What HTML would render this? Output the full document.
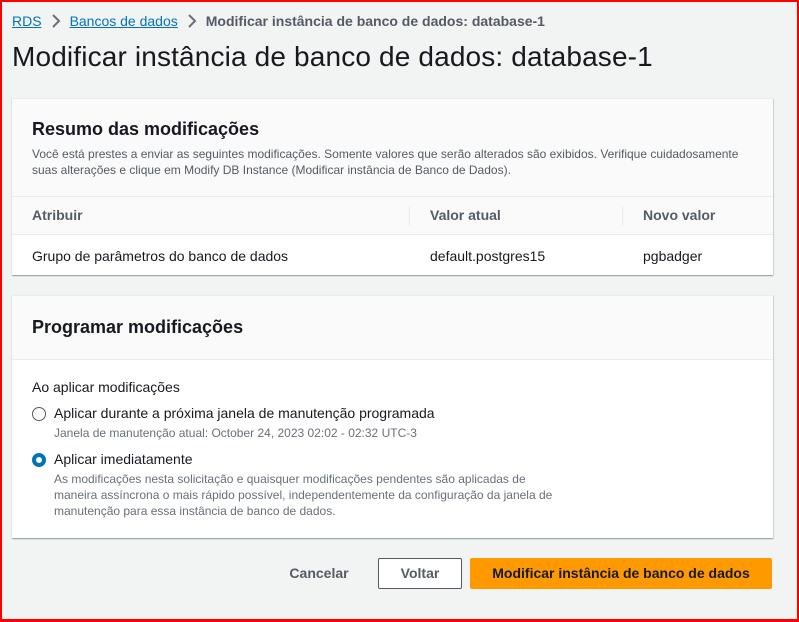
<!DOCTYPE html>
<html><head><meta charset="utf-8"><style>
*{box-sizing:border-box;margin:0;padding:0}
body{width:799px;height:622px;overflow:hidden;background:#f2f3f3;font-family:"Liberation Sans",sans-serif;color:#16191f;position:relative}
.frame{position:absolute;left:0;top:0;width:799px;height:622px;border:2px solid #f00;border-bottom-width:3px;pointer-events:none}
.bc{position:absolute;left:12px;top:13px;font-size:14px;color:#545b64}
.bc a{color:#0073bb;text-decoration:underline}
.bc svg{display:inline-block;margin:0 9px;vertical-align:-2px}
.bc b{color:#545b64}
h1{position:absolute;left:12px;top:41px;font-size:28px;letter-spacing:.15px;font-weight:normal;color:#16191f}
.card{position:absolute;left:12px;width:761px;background:#fff;box-shadow:0 1px 1px rgba(0,28,36,.35),1px 1px 1px rgba(0,28,36,.1);border-top:1px solid #eaeded}
.hd{background:#fafafa;border-bottom:1px solid #eaeded;padding:0 20px}
h2{font-size:18px;font-weight:bold}
.desc{font-size:12px;color:#545b64;line-height:16px;margin-top:6px}
.row{position:absolute;left:0;width:100%;font-size:14px}
.c{position:absolute}
.sub{font-size:12px;color:#687078;line-height:16px}
.radio{position:absolute;width:14px;height:14px;border-radius:50%;border:1.5px solid #545b64}
.radio.on{border:4px solid #0073bb;background:#fff}
.btn{position:absolute;top:558px;height:31px;font-size:14px;font-weight:bold;text-align:center;line-height:31px;border-radius:2px}
</style></head><body>
<div class="bc"><a>RDS</a><svg width="10" height="14" viewBox="0 0 10 14"><path d="M2 1l6 6-6 6" fill="none" stroke="#687078" stroke-width="2"/></svg><a>Bancos de dados</a><svg width="10" height="14" viewBox="0 0 10 14"><path d="M2 1l6 6-6 6" fill="none" stroke="#687078" stroke-width="2"/></svg><b>Modificar instância de banco de dados: database-1</b></div>
<h1>Modificar instância de banco de dados: database-1</h1>
<div class="card" style="top:98px;height:177px">
 <div class="hd" style="height:98px;padding-top:20px"><h2>Resumo das modificações</h2>
 <div class="desc">Você está prestes a enviar as seguintes modificações. Somente valores que serão alterados são exibidos. Verifique cuidadosamente suas alterações e clique em Modify DB Instance (Modificar instância de Banco de Dados).</div></div>
 <div class="row" style="top:98px;height:38px;background:#fafafa;border-bottom:1px solid #eaeded;font-weight:bold;color:#545b64">
  <span class="c" style="left:20px;top:10px">Atribuir</span>
  <span class="c" style="left:397px;top:9px;height:20px;border-left:1px solid #eaeded"></span>
  <span class="c" style="left:418px;top:10px">Valor atual</span>
  <span class="c" style="left:610px;top:9px;height:20px;border-left:1px solid #eaeded"></span>
  <span class="c" style="left:631px;top:10px">Novo valor</span></div>
 <div class="row" style="top:136px;height:41px;color:#16191f">
  <span class="c" style="left:20px;top:13px">Grupo de parâmetros do banco de dados</span>
  <span class="c" style="left:418px;top:13px">default.postgres15</span>
  <span class="c" style="left:631px;top:13px">pgbadger</span></div>
</div>
<div class="card" style="top:295px;height:243px">
 <div class="hd" style="height:64px;padding-top:21px"><h2>Programar modificações</h2></div>
 <div style="position:absolute;left:20px;top:83px;font-size:14px">Ao aplicar modificações</div>
 <div class="radio" style="left:20px;top:111px"></div>
 <div style="position:absolute;left:42px;top:109px;font-size:14px">Aplicar durante a próxima janela de manutenção programada</div>
 <div class="sub" style="position:absolute;left:42px;top:129px">Janela de manutenção atual: October 24, 2023 02:02 - 02:32 UTC-3</div>
 <div class="radio on" style="left:20px;top:157px"></div>
 <div style="position:absolute;left:42px;top:155px;font-size:14px">Aplicar imediatamente</div>
 <div class="sub" style="position:absolute;left:42px;top:175px;width:505px">As modificações nesta solicitação e quaisquer modificações pendentes são aplicadas de maneira assíncrona o mais rápido possível, independentemente da configuração da janela de manutenção para essa instância de banco de dados.</div>
</div>
<div class="btn" style="left:280px;width:78px;color:#545b64">Cancelar</div>
<div class="btn" style="left:378px;width:84px;background:#fff;border:1px solid #545b64;line-height:29px;color:#545b64">Voltar</div>
<div class="btn" style="left:470px;width:302px;background:#ff9900;color:#16191f">Modificar instância de banco de dados</div>
<div class="frame"></div>
</body></html>
